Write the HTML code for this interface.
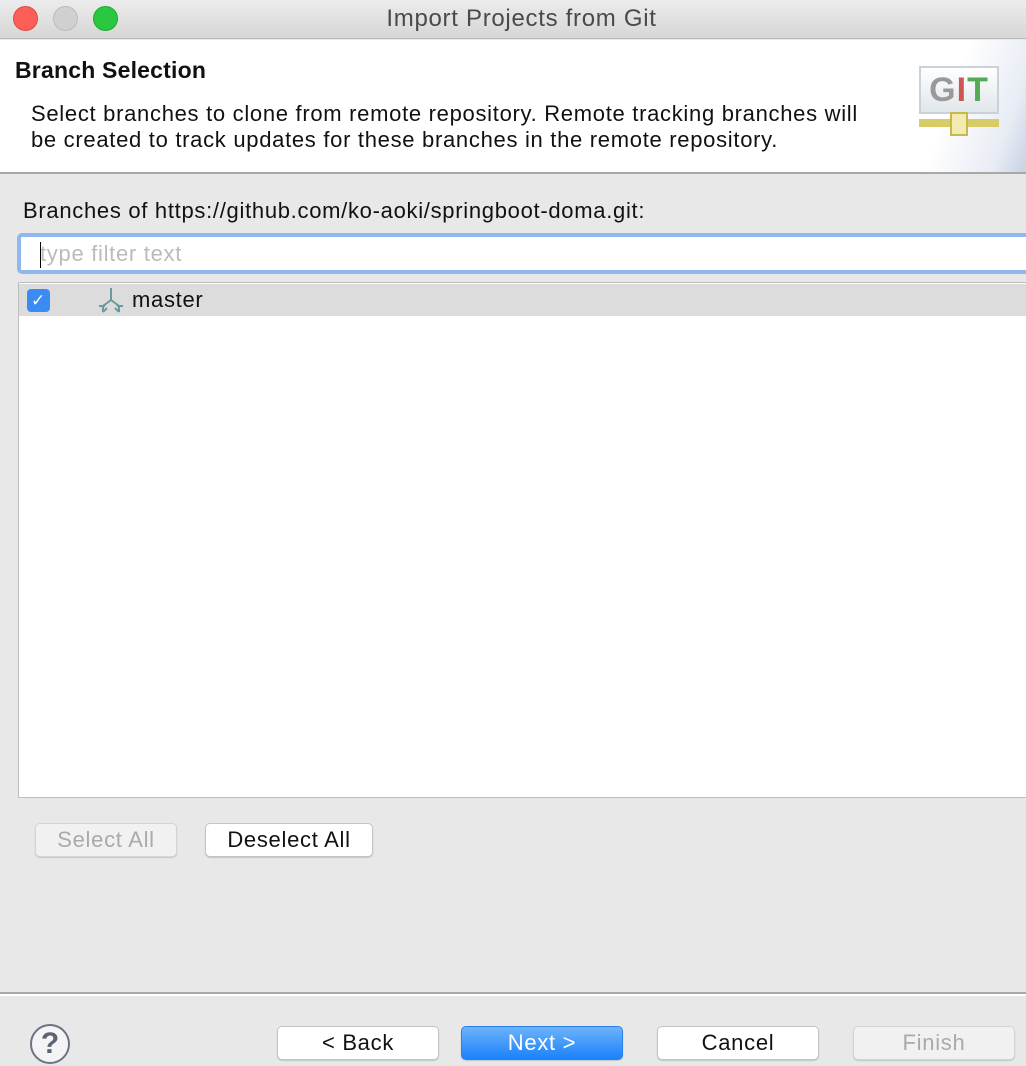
<!DOCTYPE html>
<html><head><meta charset="utf-8"><style>
*{box-sizing:border-box;margin:0;padding:0}
body{width:1026px;height:1066px;overflow:hidden;background:#e8e8e8;font-family:"Liberation Sans",sans-serif;position:relative;color:#111;letter-spacing:0.7px}
.abs{position:absolute;white-space:nowrap}
.tb{left:0;top:0;width:1026px;height:39px;background:linear-gradient(#ececec,#d6d6d6);border-bottom:1px solid #b8b8b8}
.dot{width:25px;height:25px;border-radius:50%;top:6px}
.hdr{left:0;top:40px;width:1026px;height:132px;background:#fff}
.btn{height:34px;border-radius:5px;background:#fff;border:1px solid #c4c4c4;box-shadow:0 1px 1px rgba(0,0,0,.15);font-size:22px;text-align:center;line-height:32px}
.dis{background:#f1f1f1;color:#aaa;border-color:#d4d4d4}
</style></head><body>
<div class="abs tb"></div>
<div class="abs dot" style="left:13px;background:#fc5f57;border:1px solid #de4a43"></div>
<div class="abs dot" style="left:53px;background:#d0d0d0;border:1px solid #bbb"></div>
<div class="abs dot" style="left:93px;background:#2ac840;border:1px solid #1ea934"></div>
<div class="abs" style="left:0;width:1043px;top:5px;text-align:center;font-size:24px;color:#4a4a4a">Import Projects from Git</div>
<div class="abs hdr"></div>
<div class="abs" style="left:900px;top:40px;width:126px;height:132px;background:linear-gradient(110deg,#fff 40%,#e8ecf4 80%,#c8d2e4)"></div>
<div class="abs" style="left:0;top:172px;width:1026px;height:2px;background:#a8a8a8"></div>
<div class="abs" style="left:15px;top:57px;font-size:23px;font-weight:bold;letter-spacing:0.2px">Branch Selection</div>
<div class="abs" style="left:31px;top:101px;font-size:22px;line-height:26px">Select branches to clone from remote repository. Remote tracking branches will<br>be created to track updates for these branches in the remote repository.</div>
<div class="abs" style="left:919px;top:66px;width:80px;height:48px;border:2px solid #c9d2d8;background:linear-gradient(#fff,#e0e6ea);font:bold 34px 'Liberation Sans';color:#999;text-align:center;line-height:44px;letter-spacing:1px">G<span style="color:#c55">I</span><span style="color:#5a5">T</span></div>
<div class="abs" style="left:919px;top:119px;width:80px;height:8px;background:#d8cc66"></div>
<div class="abs" style="left:950px;top:112px;width:18px;height:24px;background:#f2eab0;border:2px solid #c8b84a"></div>
<div class="abs" style="left:23px;top:198px;font-size:22px">Branches of https://github.com/ko-aoki/springboot-doma.git:</div>
<div class="abs" style="left:17px;top:233px;width:1015px;height:41px;border:4px solid #8fb9ee;border-radius:5px;background:#fff"></div>
<div class="abs" style="left:40px;top:241px;font-size:22px;color:#bbb">type filter text</div>
<div class="abs" style="left:40px;top:242px;width:1px;height:26px;background:#000"></div>
<div class="abs" style="left:18px;top:282px;width:1010px;height:516px;background:#fff;border:1px solid #bdbdbd"></div>
<div class="abs" style="left:19px;top:284px;width:1007px;height:32px;background:#dcdcdc"></div>
<div class="abs" style="left:27px;top:289px;width:23px;height:23px;border-radius:4px;background:#3a8cf3;color:#fff;font-size:17px;text-align:center;line-height:23px">✓</div>
<svg class="abs" style="left:95px;top:286px" width="32" height="30" viewBox="0 0 32 30"><g fill="none" stroke="#6a9a9a" stroke-width="2"><path d="M16 2v12M16 14l-8 6v6M16 14l8 6v6M8 26l4-4M24 26l-4-4M4 20h6M22 20h6"/></g></svg>
<div class="abs" style="left:132px;top:287px;font-size:22px">master</div>
<div class="abs btn dis" style="left:35px;top:823px;width:142px">Select All</div>
<div class="abs btn" style="left:205px;top:823px;width:168px">Deselect All</div>
<div class="abs" style="left:0;top:992px;width:1026px;height:2px;background:#a8a8a8"></div>
<div class="abs" style="left:0;top:994px;width:1026px;height:2px;background:#fff"></div>
<div class="abs" style="left:30px;top:1024px;width:40px;height:40px;border-radius:50%;border:2px solid #6a7484;background:#f4f4f4;font-size:30px;font-weight:bold;color:#5a6474;text-align:center;line-height:36px;letter-spacing:0">?</div>
<div class="abs btn" style="left:277px;top:1026px;width:162px">&lt; Back</div>
<div class="abs btn" style="left:461px;top:1026px;width:162px;background:linear-gradient(#6cb3fa,#1a82fb);color:#fff;border-color:#2a80e8">Next &gt;</div>
<div class="abs btn" style="left:657px;top:1026px;width:162px">Cancel</div>
<div class="abs btn dis" style="left:853px;top:1026px;width:162px">Finish</div>
</body></html>
